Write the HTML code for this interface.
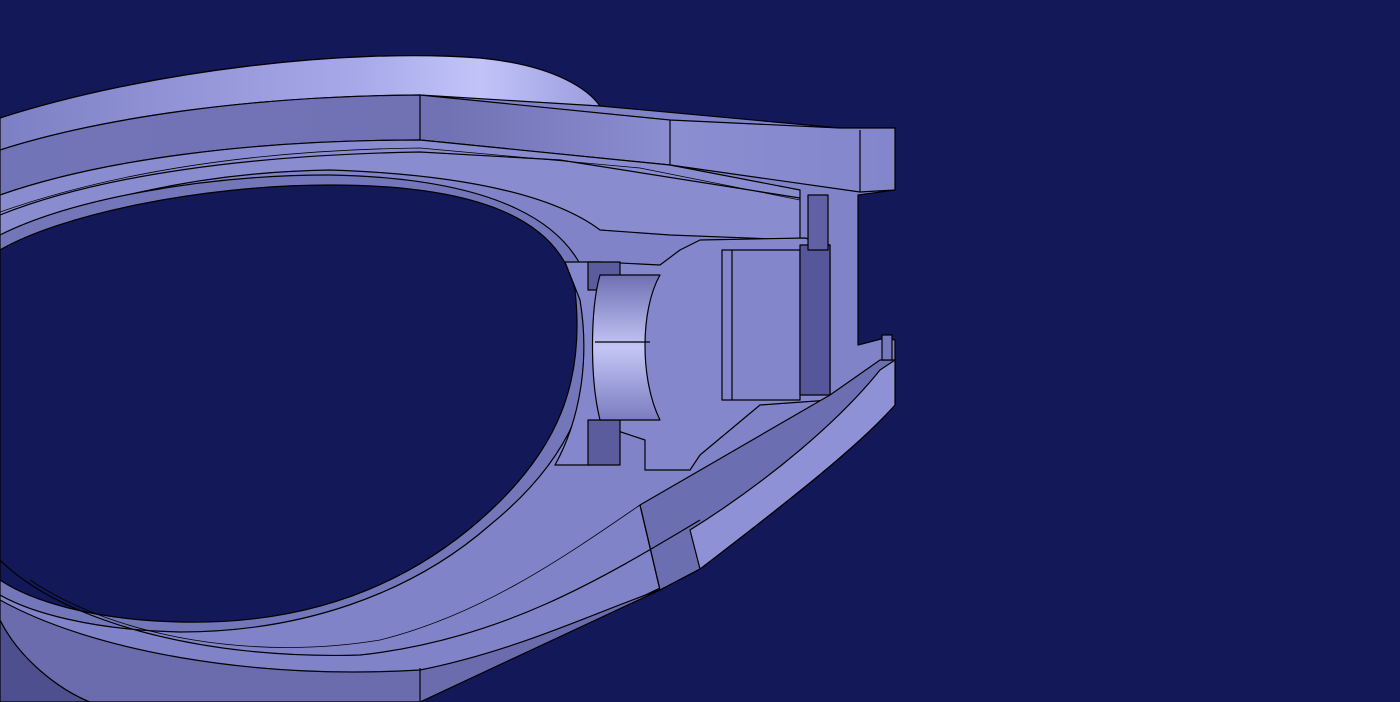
<!DOCTYPE html>
<html><head><style>
html,body{margin:0;padding:0;background:#131858;width:1400px;height:702px;overflow:hidden}
svg{display:block}
</style></head><body>
<svg width="1400" height="702" viewBox="0 0 1400 702" xmlns="http://www.w3.org/2000/svg">
<defs>
<linearGradient id="topg" x1="0" y1="0" x2="1" y2="0">
<stop offset="0" stop-color="#7d7fc4"/><stop offset="0.6" stop-color="#a7a9ea"/><stop offset="0.8" stop-color="#c2c4f8"/><stop offset="1" stop-color="#9a9cde"/>
</linearGradient>
<linearGradient id="rim" x1="0" y1="0" x2="1" y2="0">
<stop offset="0" stop-color="#7274b8"/><stop offset="0.5" stop-color="#7072b4"/><stop offset="0.75" stop-color="#8c8ed2"/><stop offset="1" stop-color="#8486cc"/>
</linearGradient>
<linearGradient id="cyl" x1="0" y1="0" x2="0" y2="1">
<stop offset="0" stop-color="#6e70b4"/><stop offset="0.5" stop-color="#c4c6f6"/><stop offset="1" stop-color="#7a7cc0"/>
</linearGradient>
</defs>
<g stroke="#000" stroke-width="1.2" stroke-linejoin="round">
<path d="M0,118 C150,70 350,48 480,58 C560,66 590,92 600,106 L840,128 L895,128 L895,190 L858,195 L858,345 L885,338 L895,340 L895,405 C860,445 790,500 700,569 L420,702 L0,702 Z" fill="#8183c8"/>
<path d="M0,118 C150,70 350,48 480,58 C560,66 590,92 600,106 L420,95 C250,96 100,118 0,150 Z" fill="url(#topg)"/>
<path d="M0,150 C100,118 250,96 420,95 L670,120 L840,128 L895,128 L895,190 L860,192 L670,165 L420,140 C250,140 100,160 0,195 Z" fill="url(#rim)"/>
<line x1="420" y1="95" x2="420" y2="140"/>
<line x1="670" y1="120" x2="670" y2="165"/>
<line x1="860" y1="130" x2="860" y2="192"/>
<path d="M0,195 C100,160 250,140 420,140 L670,165 L800,190 L800,240 L670,235 L600,230 C560,200 480,175 330,170 C200,172 80,200 0,240 Z" fill="#8a8cd0"/>
<path d="M0,215 C100,175 250,155 420,152 L560,160 L800,198" fill="none"/>
<path d="M0,235 C70,200 200,175 330,175 C490,178 580,220 592,300 C600,390 570,460 490,525 C410,595 300,632 180,632 C90,630 30,612 0,595 Z" fill="#7476ba"/>
<path d="M0,250 C60,215 200,185 330,185 C480,185 560,220 575,290 C585,380 560,450 480,520 C400,590 300,625 180,622 C90,620 30,600 0,580 Z" fill="#131858"/>
<path d="M565,262 L600,262 L660,265 L680,250 L700,240 L805,238 L830,245 L830,400 L760,405 L700,455 L690,470 L645,470 L645,440 L600,425 L590,465 L555,465 C580,420 590,360 580,300 Z" fill="#8587cc"/>
<rect x="588" y="262" width="32" height="28" fill="#5a5c9e"/>
<rect x="588" y="420" width="32" height="45" fill="#5a5c9e"/>
<path d="M600,275 C590,310 590,380 600,420 L660,420 C640,380 640,310 660,275 Z" fill="url(#cyl)"/>
<line x1="595" y1="342" x2="650" y2="342"/>
<rect x="722" y="250" width="78" height="150" fill="#8486cb"/>
<line x1="732" y1="250" x2="732" y2="400"/>
<rect x="800" y="245" width="30" height="150" fill="#56579a"/>
<rect x="808" y="195" width="20" height="55" fill="#5f61a4"/>
<path d="M640,505 L830,395 L880,360 L895,360 L895,405 C860,445 790,500 700,569 L660,590 Z" fill="#6c6eb2"/>
<path d="M700,569 L660,590 L640,505" fill="none"/>
<path d="M700,569 C790,500 860,445 895,405 L895,360 L880,370 C840,420 770,480 690,530 Z" fill="#8f91d6"/>
<rect x="882" y="335" width="10" height="25" fill="#7678bc"/>
<path d="M0,600 C90,650 250,680 420,670 C520,650 600,610 660,590 L420,702 L0,702 Z" fill="#6a6cad"/>
<path d="M0,560 C60,620 200,660 360,655 C500,640 600,580 700,520" fill="none"/>
<line x1="420" y1="668" x2="420" y2="702"/>
<path d="M0,620 C20,660 60,690 90,702 L0,702 Z" fill="#4d4f8e"/>
<path d="M0,212 C120,170 260,150 420,148 L640,168 L800,200" fill="none" stroke-width="0.8"/>
<path d="M30,580 C120,640 260,660 380,640 C480,615 560,560 640,505" fill="none" stroke-width="0.8"/>
</g>
</svg>
</body></html>
